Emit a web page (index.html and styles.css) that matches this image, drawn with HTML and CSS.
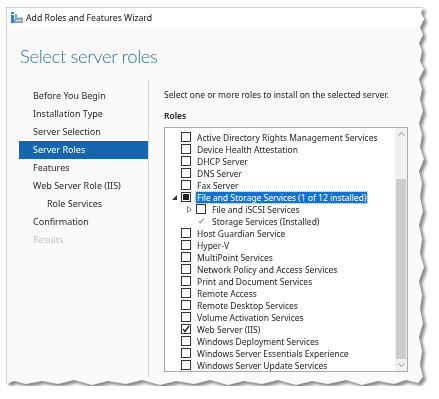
FILE: index.html
```html
<!DOCTYPE html>
<html>
<head>
    <meta charset="utf-8" />
    <title>Add Roles and Features Wizard</title>
    <link rel="stylesheet" href="styles.css">
</head>
<body>

<div class="sheet">
    <div class="window">
        <div class="titlebar">
            <svg class="app-icon" width="12" height="11" viewBox="0 0 12 11">
                <rect x="0" y="0" width="3" height="2" fill="#2b7fd6"/>
                <rect x="0" y="3" width="3" height="8" fill="#2b7fd6"/>
                <rect x="4" y="2" width="2" height="5" fill="#5fa8e8"/>
                <path d="M3 8 L6 5.5 L12 5.5 L12 11 L3 11 Z" fill="#8aa4bf"/>
                <rect x="5" y="8" width="6" height="1" fill="#dfe8f1"/>
            </svg>
            <span>Add Roles and Features Wizard</span>
        </div>

        <h1 class="heading">Select server roles</h1>

        <div class="body">
            <ul class="nav">
                <li>Before You Begin</li>
                <li>Installation Type</li>
                <li>Server Selection</li>
                <li class="active">Server Roles</li>
                <li>Features</li>
                <li>Web Server Role (IIS)</li>
                <li class="sub">Role Services</li>
                <li>Confirmation</li>
                <li class="disabled">Results</li>
            </ul>

            <div class="content">
                <p class="intro">Select one or more roles to install on the selected server.</p>
                <div class="label">Roles</div>

                <div class="listbox">
                    <div class="rows">
                        <div class="row"><span class="exp"></span><span class="cb"></span><span class="txt">Active Directory Rights Management Services</span></div>
                        <div class="row"><span class="exp"></span><span class="cb"></span><span class="txt">Device Health Attestation</span></div>
                        <div class="row"><span class="exp"></span><span class="cb"></span><span class="txt">DHCP Server</span></div>
                        <div class="row"><span class="exp"></span><span class="cb"></span><span class="txt">DNS Server</span></div>
                        <div class="row"><span class="exp"></span><span class="cb"></span><span class="txt">Fax Server</span></div>
                        <div class="row">
                            <span class="exp"><svg width="5" height="5" viewBox="0 0 5 5"><polygon points="5,0 5,5 0,5" fill="#333"/></svg></span>
                            <span class="cb partial"></span>
                            <span class="txt selected">File and Storage Services (1 of 12 installed)</span>
                        </div>
                        <div class="row level2">
                            <span class="exp"><svg width="5" height="7" viewBox="0 0 5 7"><polygon points="0.5,0.5 4.5,3.5 0.5,6.5" fill="none" stroke="#888" stroke-width="1"/></svg></span>
                            <span class="cb"></span>
                            <span class="txt">File and iSCSI Services</span>
                        </div>
                        <div class="row level2">
                            <span class="exp"></span>
                            <span class="cb locked"><svg width="10" height="10" viewBox="0 0 10 10"><polyline points="2,5 4,7.5 8.5,2" fill="none" stroke="#8a8a8a" stroke-width="1.3"/></svg></span>
                            <span class="txt">Storage Services (Installed)</span>
                        </div>
                        <div class="row"><span class="exp"></span><span class="cb"></span><span class="txt">Host Guardian Service</span></div>
                        <div class="row"><span class="exp"></span><span class="cb"></span><span class="txt">Hyper-V</span></div>
                        <div class="row"><span class="exp"></span><span class="cb"></span><span class="txt">MultiPoint Services</span></div>
                        <div class="row"><span class="exp"></span><span class="cb"></span><span class="txt">Network Policy and Access Services</span></div>
                        <div class="row"><span class="exp"></span><span class="cb"></span><span class="txt">Print and Document Services</span></div>
                        <div class="row"><span class="exp"></span><span class="cb"></span><span class="txt">Remote Access</span></div>
                        <div class="row"><span class="exp"></span><span class="cb"></span><span class="txt">Remote Desktop Services</span></div>
                        <div class="row"><span class="exp"></span><span class="cb"></span><span class="txt">Volume Activation Services</span></div>
                        <div class="row">
                            <span class="exp"></span>
                            <span class="cb"><svg width="8" height="8" viewBox="0 0 8 8"><polyline points="1,4 3,6.5 7,1" fill="none" stroke="#222" stroke-width="1.4"/></svg></span>
                            <span class="txt">Web Server (IIS)</span>
                        </div>
                        <div class="row"><span class="exp"></span><span class="cb"></span><span class="txt">Windows Deployment Services</span></div>
                        <div class="row"><span class="exp"></span><span class="cb"></span><span class="txt">Windows Server Essentials Experience</span></div>
                        <div class="row"><span class="exp"></span><span class="cb"></span><span class="txt">Windows Server Update Services</span></div>
                    </div>
                    <div class="scrollbar">
                        <div class="arrow">
                            <svg width="7" height="4" viewBox="0 0 7 4"><polyline points="0.5,3.5 3.5,0.5 6.5,3.5" fill="none" stroke="#8a8a8a" stroke-width="1"/></svg>
                        </div>
                        <div class="track">
                            <div class="thumb"></div>
                        </div>
                        <div class="arrow">
                            <svg width="7" height="4" viewBox="0 0 7 4"><polyline points="0.5,0.5 3.5,3.5 6.5,0.5" fill="none" stroke="#8a8a8a" stroke-width="1"/></svg>
                        </div>
                    </div>
                </div>
            </div>
        </div>
    </div>
</div>

</body>
</html>
```

FILE: styles.css
```css
body, html {
    margin: 0;
    padding: 0;
    background: #ffffff;
    font-family: "Noto Sans", "Open Sans", Arial, sans-serif;
    color: #1e1e1e;
}
.sheet {
    width: 418px;
    height: 379px;
    margin: 7px 0 0 6px;
    filter: drop-shadow(3px 3px 1.5px rgba(0,0,0,0.45));
}
.window {
    width: 100%;
    height: 100%;
    box-sizing: border-box;
    background: #fafafa;
    border-top: 1px solid #cfcfcf;
    border-left: 1px solid #cfcfcf;
    display: flex;
    flex-direction: column;
    clip-path: polygon(0 0, 417px 0, 415px 6px, 418px 12px, 414px 20px, 417px 28px, 413px 36px, 416px 44px, 414px 54px, 418px 62px, 413px 72px, 416px 82px, 414px 92px, 417px 104px, 413px 116px, 416px 128px, 414px 140px, 418px 152px, 413px 164px, 416px 176px, 414px 190px, 417px 204px, 413px 218px, 416px 232px, 414px 246px, 418px 260px, 413px 274px, 416px 288px, 414px 302px, 417px 316px, 413px 330px, 416px 344px, 414px 358px, 417px 370px, 412px 376px, 400px 373px, 388px 377px, 372px 374px, 356px 378px, 340px 373px, 322px 377px, 306px 374px, 290px 378px, 272px 373px, 256px 377px, 238px 374px, 222px 378px, 204px 373px, 188px 377px, 170px 374px, 154px 378px, 136px 373px, 120px 377px, 102px 374px, 86px 378px, 68px 373px, 52px 377px, 36px 374px, 20px 377px, 8px 374px, 0 377px);
}
.titlebar {
    height: 19px;
    background: #ffffff;
    display: flex;
    align-items: center;
    padding-left: 4px;
    font-size: 8.7px;
    color: #111;
}
.app-icon {
    margin-right: 3px;
}
.heading {
    margin: 0;
    height: 53px;
    padding: 18px 0 0 13px;
    box-sizing: border-box;
    font-family: "Lato", "Noto Sans", sans-serif;
    font-size: 18.5px;
    font-weight: 300;
    letter-spacing: -0.4px;
    color: #2f7698;
    line-height: 22px;
}
.body {
    flex: 1;
    display: flex;
    padding-bottom: 8px;
}
.nav {
    list-style: none;
    margin: 0;
    padding: 7px 0 0 0;
    width: 142px;
    border-right: 1px solid #d9d9d9;
    box-sizing: border-box;
}
.nav li {
    height: 18px;
    line-height: 18px;
    margin-left: 12px;
    padding-left: 14px;
    font-size: 9px;
    color: #2a2a2a;
}
.nav li.sub {
    padding-left: 28px;
}
.nav li.active {
    background: #1565b0;
    color: #ffffff;
}
.nav li.disabled {
    color: #c4c4c4;
}
.content {
    flex: 1;
    padding: 8px 0 0 15px;
}
.intro {
    margin: 0;
    height: 22px;
    line-height: 14px;
    font-size: 8.5px;
    color: #222;
}
.label {
    height: 17px;
    font-size: 8.5px;
    font-weight: 600;
    color: #222;
}
.listbox {
    width: 244px;
    height: 245px;
    box-sizing: border-box;
    border: 1px solid #ababab;
    background: #ffffff;
    display: flex;
}
.rows {
    flex: 1;
    padding-top: 3px;
}
.row {
    height: 12px;
    display: flex;
    align-items: center;
    font-size: 8.5px;
    color: #1e1e1e;
}
.exp {
    width: 16px;
    display: flex;
    justify-content: center;
    padding-left: 3px;
    box-sizing: border-box;
}
.row.level2 .exp {
    width: 31px;
    padding-left: 18px;
}
.cb {
    width: 10px;
    height: 10px;
    box-sizing: border-box;
    border: 1px solid #333;
    background: #fff;
    display: flex;
    align-items: center;
    justify-content: center;
    flex: none;
}
.cb.partial::after {
    content: "";
    width: 6px;
    height: 6px;
    background: #222;
}
.cb.locked {
    border-color: transparent;
}
.txt {
    margin-left: 5px;
    padding: 0 1px;
    line-height: 11px;
    white-space: nowrap;
}
.txt.selected {
    background: #0f73d6;
    color: #ffffff;
    outline: 1px dotted #8cc0f0;
}
.scrollbar {
    width: 12px;
    background: #f0f0f0;
    display: flex;
    flex-direction: column;
}
.arrow {
    height: 12px;
    display: flex;
    align-items: center;
    justify-content: center;
}
.track {
    flex: 1;
    padding-top: 39px;
    display: flex;
    flex-direction: column;
}
.thumb {
    flex: 1;
    margin: 0 1px;
    background: #cdcdcd;
}
```
